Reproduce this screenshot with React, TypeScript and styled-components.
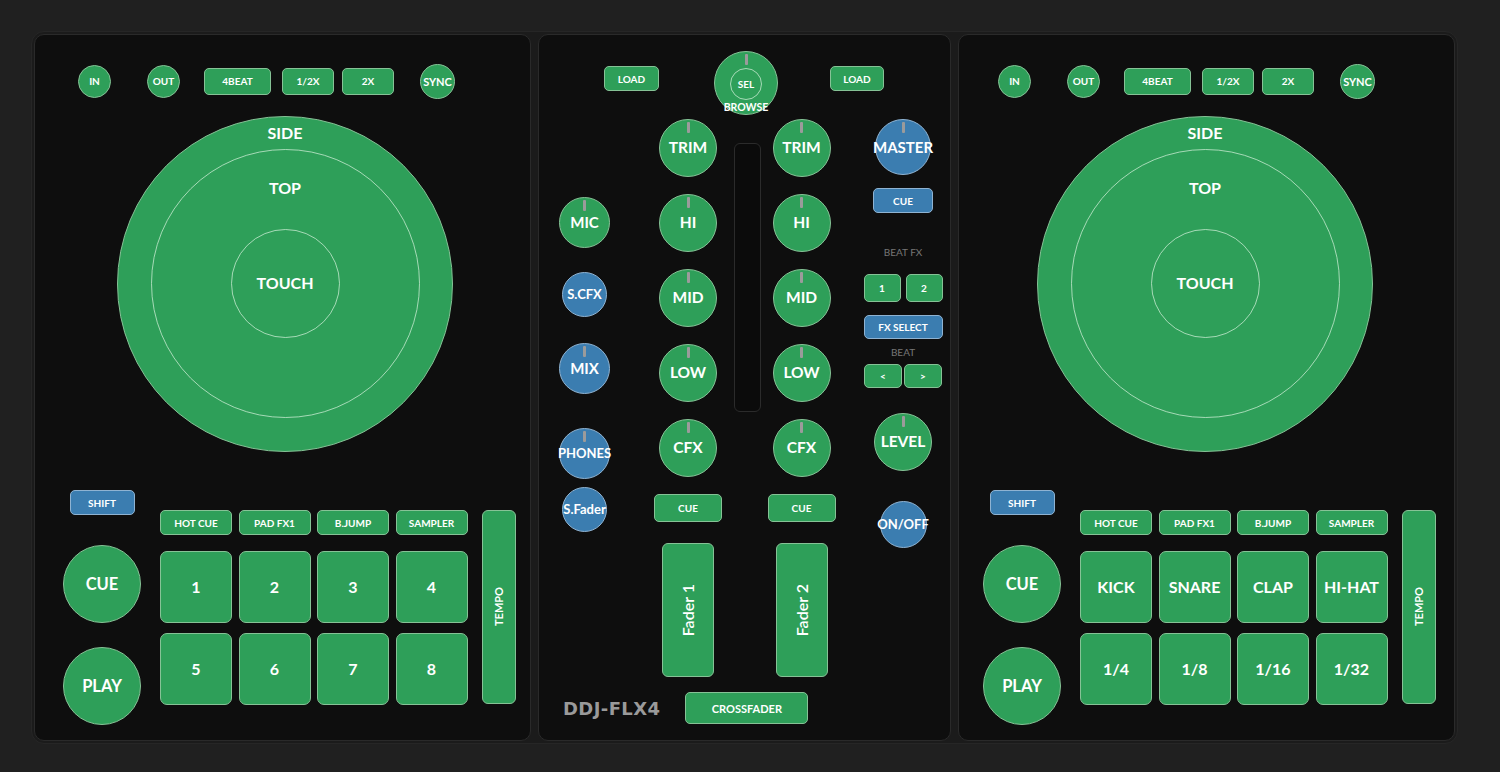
import React from 'react';
import styled, { createGlobalStyle, css } from 'styled-components';

type Tone = 'green' | 'blue';

const C = {
  page: '#202020',
  frame: '#1b1b1b',
  frameEdge: '#262626',
  panel: '#0e0e0e',
  panelEdge: '#2a2a2a',
  green: '#2e9f59',
  greenEdge: '#86c296',
  blue: '#3b7db0',
  blueEdge: '#8fb3d2',
  ring: 'rgba(205, 238, 214, 0.75)',
  mark: '#9b9b9b',
};

const GlobalStyle = createGlobalStyle`
  html, body { margin: 0; padding: 0; background: ${C.page}; }
  body {
    width: 1500px; height: 772px; overflow: hidden;
    font-family: Lato, "Open Sans", "DejaVu Sans", sans-serif;
    -webkit-font-smoothing: antialiased;
  }
  #root { width: 1500px; height: 772px; }
`;

const toneStyles = ({ $tone }: { $tone?: Tone }) =>
  $tone === 'blue'
    ? css`background: ${C.blue}; border-color: ${C.blueEdge};`
    : css`background: ${C.green}; border-color: ${C.greenEdge};`;

interface BoxProps {
  $tone?: Tone;
  $fs?: number;
  $ml?: number;
  $mt?: number;
}

const Control = styled.div<BoxProps>`
  box-sizing: border-box;
  flex-shrink: 0;
  display: flex;
  align-items: center;
  justify-content: center;
  border: 1.8px solid;
  ${toneStyles}
  color: #fff;
  font-weight: 700;
  font-size: ${(p) => p.$fs ?? 10}px;
  line-height: 1;
  white-space: nowrap;
  margin-left: ${(p) => p.$ml ?? 0}px;
  margin-top: ${(p) => p.$mt ?? 0}px;
  user-select: none;
`;

const RoundBtn = styled(Control)<{ $size: number }>`
  width: ${(p) => p.$size}px;
  height: ${(p) => p.$size}px;
  border-radius: 50%;
`;

const Knob = styled(RoundBtn)<{ $mark?: boolean }>`
  position: relative;
  ${(p) =>
    p.$mark !== false &&
    css`
      &::before {
        content: '';
        position: absolute;
        top: 2px;
        left: 50%;
        width: 3px;
        height: 11px;
        margin-left: -1.5px;
        background: ${C.mark};
        border-radius: 1px;
      }
    `}
`;

const RectBtn = styled(Control)<{ $w: number; $h: number; $r?: number }>`
  width: ${(p) => p.$w}px;
  height: ${(p) => p.$h}px;
  border-radius: ${(p) => p.$r ?? 5}px;
`;

const Pad = styled(Control)`
  border-radius: 7px;
  font-size: 16px;
`;

const ModeBtn = styled(Control)`
  border-radius: 5px;
  font-size: 10px;
`;

const VerticalText = styled.span<{ $fs: number; $weight?: number }>`
  writing-mode: vertical-rl;
  transform: rotate(180deg);
  font-size: ${(p) => p.$fs}px;
  font-weight: ${(p) => p.$weight ?? 700};
`;

/* ---------- page frame ---------- */

const Frame = styled.main`
  margin: 31px 0 0 31px;
  width: 1427px;
  height: 713px;
  box-sizing: border-box;
  padding: 2px;
  border: 1px solid ${C.frameEdge};
  border-radius: 13px;
  background: ${C.frame};
  display: flex;
  gap: 7px;
`;

const Panel = styled.section`
  box-sizing: border-box;
  height: 100%;
  background: ${C.panel};
  border: 1px solid ${C.panelEdge};
  border-radius: 10px;
  display: flex;
  flex-direction: column;
  align-items: flex-start;
`;

/* ---------- deck ---------- */

const DeckPanel = styled(Panel)<{ $pl: number }>`
  width: 497px;
  padding: 28px 0 0 ${(p) => p.$pl}px;
`;

const TransportRow = styled.div`
  display: flex;
  align-items: center;
  height: 36px;
`;

const JogOuter = styled.div`
  box-sizing: border-box;
  width: 336px;
  height: 336px;
  margin: 17px 0 0 54px;
  border-radius: 50%;
  background: ${C.green};
  border: 1.5px solid ${C.greenEdge};
  display: flex;
  flex-direction: column;
  align-items: center;
  color: #fff;
  font-weight: 700;
`;

const RingLabel = styled.div<{ $h: number; $mt?: number }>`
  height: ${(p) => p.$h}px;
  line-height: ${(p) => p.$h}px;
  margin-top: ${(p) => p.$mt ?? 0}px;
  font-size: 16px;
`;

const Ring = styled.div<{ $size: number; $mt?: number; $center?: boolean }>`
  box-sizing: border-box;
  flex-shrink: 0;
  width: ${(p) => p.$size}px;
  height: ${(p) => p.$size}px;
  margin-top: ${(p) => p.$mt ?? 0}px;
  border-radius: 50%;
  border: 1.5px solid ${C.ring};
  display: flex;
  flex-direction: column;
  align-items: center;
  justify-content: ${(p) => (p.$center ? 'center' : 'flex-start')};
`;

const DeckBottom = styled.div`
  display: flex;
  align-items: flex-start;
  margin-top: 38px;
`;

const PlayColumn = styled.div`
  width: 78px;
  display: flex;
  flex-direction: column;
  align-items: center;
`;

const PadArea = styled.div`
  margin: 20px 0 0 19px;
  display: flex;
  flex-direction: column;
`;

const PadGrid = styled.div<{ $rowH: number; $mt?: number }>`
  display: grid;
  grid-template-columns: repeat(4, 72px);
  grid-auto-rows: ${(p) => p.$rowH}px;
  column-gap: 6.5px;
  row-gap: 10px;
  margin-top: ${(p) => p.$mt ?? 0}px;
`;

const TempoStrip = styled(Control)`
  width: 34px;
  height: 194px;
  margin: 20px 0 0 14px;
  border-radius: 6px;
`;

const MODES = ['HOT CUE', 'PAD FX1', 'B.JUMP', 'SAMPLER'];

const Deck = ({ pl, pads }: { pl: number; pads: string[] }) => (
  <DeckPanel $pl={pl}>
    <TransportRow>
      <RoundBtn $size={33} $ml={15}>IN</RoundBtn>
      <RoundBtn $size={33} $ml={36}>OUT</RoundBtn>
      <RectBtn $w={67} $h={27} $ml={24}>4BEAT</RectBtn>
      <RectBtn $w={52} $h={27} $ml={11}>1/2X</RectBtn>
      <RectBtn $w={52} $h={27} $ml={8}>2X</RectBtn>
      <RoundBtn $size={35} $ml={26} $fs={11}>SYNC</RoundBtn>
    </TransportRow>

    <JogOuter>
      <RingLabel $h={32}>SIDE</RingLabel>
      <Ring $size={269}>
        <RingLabel $h={20} $mt={28}>TOP</RingLabel>
        <Ring $size={109} $mt={30.5} $center>
          <RingLabel $h={20}>TOUCH</RingLabel>
        </Ring>
      </Ring>
    </JogOuter>

    <DeckBottom>
      <PlayColumn>
        <RectBtn $tone="blue" $w={65} $h={25}>SHIFT</RectBtn>
        <RoundBtn $size={78} $fs={16.5} $mt={30}>CUE</RoundBtn>
        <RoundBtn $size={78} $fs={16.5} $mt={24}>PLAY</RoundBtn>
      </PlayColumn>
      <PadArea>
        <PadGrid $rowH={25}>
          {MODES.map((m) => (
            <ModeBtn key={m}>{m}</ModeBtn>
          ))}
        </PadGrid>
        <PadGrid $rowH={72} $mt={16}>
          {pads.map((p) => (
            <Pad key={p}>{p}</Pad>
          ))}
        </PadGrid>
      </PadArea>
      <TempoStrip>
        <VerticalText $fs={11}>TEMPO</VerticalText>
      </TempoStrip>
    </DeckBottom>
  </DeckPanel>
);

/* ---------- mixer ---------- */

const MixerPanel = styled(Panel)`
  width: 413px;
  padding-top: 16px;
`;

const MixerTop = styled.div`
  display: flex;
  align-items: flex-start;
  padding-left: 65px;
`;

const BrowseKnob = styled(Knob)`
  flex-direction: column;
  justify-content: flex-start;
  padding-top: 15.5px;
`;

const SelRing = styled.div`
  box-sizing: border-box;
  width: 32px;
  height: 32px;
  border-radius: 50%;
  border: 1.5px solid ${C.ring};
  display: flex;
  align-items: center;
  justify-content: center;
  font-size: 10px;
`;

const BrowseLabel = styled.div`
  margin-top: 2px;
  font-size: 10.5px;
  line-height: 11px;
`;

const MixerBody = styled.div`
  display: flex;
  align-items: flex-start;
  padding-left: 17px;
  margin-top: 4px;
`;

const MixCol = styled.div<{ $w: number; $ml?: number }>`
  width: ${(p) => p.$w}px;
  margin-left: ${(p) => p.$ml ?? 0}px;
  display: flex;
  flex-direction: column;
  align-items: center;
`;

const ChannelStack = styled(MixCol)`
  gap: 17px;
`;

const MeterSlot = styled.div`
  box-sizing: border-box;
  width: 27px;
  height: 269px;
  margin-top: 24px;
  border: 1.5px solid #2b2b2b;
  border-radius: 6px;
  background: #0b0b0b;
`;

const Fader = styled(Control)`
  width: 52px;
  height: 134px;
  border-radius: 6px;
  margin-top: 4px;
`;

const SectionLabel = styled.div<{ $mt: number }>`
  margin-top: ${(p) => p.$mt}px;
  height: 12px;
  line-height: 12px;
  font-size: 10px;
  font-weight: 400;
  color: #767676;
  white-space: nowrap;
`;

const PairRow = styled.div<{ $gap: number; $mt: number }>`
  display: flex;
  gap: ${(p) => p.$gap}px;
  margin-top: ${(p) => p.$mt}px;
`;

const MixerFoot = styled.div`
  display: flex;
  align-items: center;
  gap: 25px;
  padding-left: 24px;
  margin-top: 15px;
`;

const Brand = styled.div`
  font-family: "DejaVu Sans", Verdana, sans-serif;
  font-weight: 700;
  font-size: 18px;
  color: #9a9a9a;
  letter-spacing: 0.4px;
  white-space: nowrap;
`;

const EQ = ['TRIM', 'HI', 'MID', 'LOW', 'CFX'];

const Channel = ({ ml, label }: { ml: number; label: string }) => (
  <ChannelStack $w={64} $ml={ml}>
    {EQ.map((k) => (
      <Knob key={k} $size={58} $fs={15.5}>
        {k}
      </Knob>
    ))}
    <RectBtn $w={68} $h={28}>CUE</RectBtn>
    <Fader>
      <VerticalText $fs={16} $weight={600}>
        {label}
      </VerticalText>
    </Fader>
  </ChannelStack>
);

const Mixer = () => (
  <MixerPanel>
    <MixerTop>
      <RectBtn $w={55} $h={25} $mt={15}>LOAD</RectBtn>
      <BrowseKnob as="div" $size={64} $ml={55}>
        <SelRing>SEL</SelRing>
        <BrowseLabel>BROWSE</BrowseLabel>
      </BrowseKnob>
      <RectBtn $w={54} $h={25} $mt={15} $ml={52}>LOAD</RectBtn>
    </MixerTop>

    <MixerBody>
      <MixCol $w={57}>
        <Knob $size={51} $fs={15} $mt={78}>MIC</Knob>
        <Knob $size={45} $fs={13} $mt={24} $tone="blue" $mark={false}>S.CFX</Knob>
        <Knob $size={51} $fs={15} $mt={26} $tone="blue">MIX</Knob>
        <Knob $size={51} $fs={13} $mt={34} $tone="blue">PHONES</Knob>
        <Knob $size={45} $fs={13} $mt={8} $tone="blue" $mark={false}>S.Fader</Knob>
      </MixCol>

      <Channel ml={43} label="Fader 1" />

      <MixCol $w={27} $ml={14}>
        <MeterSlot />
      </MixCol>

      <Channel ml={8.5} label="Fader 2" />

      <MixCol $w={84} $ml={27.5}>
        <Knob $size={56} $fs={15} $tone="blue">MASTER</Knob>
        <RectBtn $w={60} $h={25} $mt={13} $tone="blue">CUE</RectBtn>
        <SectionLabel $mt={33}>BEAT FX</SectionLabel>
        <PairRow $gap={5} $mt={16}>
          <RectBtn $w={37} $h={28}>1</RectBtn>
          <RectBtn $w={37} $h={28}>2</RectBtn>
        </PairRow>
        <RectBtn $w={79} $h={24} $mt={13} $tone="blue">FX SELECT</RectBtn>
        <SectionLabel $mt={7}>BEAT</SectionLabel>
        <PairRow $gap={2} $mt={6}>
          <RectBtn $w={38} $h={24}>&lt;</RectBtn>
          <RectBtn $w={38} $h={24}>&gt;</RectBtn>
        </PairRow>
        <Knob $size={58} $fs={15.5} $mt={25}>LEVEL</Knob>
        <Knob $size={47} $fs={13} $mt={30} $tone="blue" $mark={false}>ON/OFF</Knob>
      </MixCol>
    </MixerBody>

    <MixerFoot>
      <Brand>DDJ-FLX4</Brand>
      <RectBtn $w={123} $h={32} $fs={11}>CROSSFADER</RectBtn>
    </MixerFoot>
  </MixerPanel>
);

export default function App() {
  return (
    <>
      <GlobalStyle />
      <Frame>
        <Deck pl={28} pads={['1', '2', '3', '4', '5', '6', '7', '8']} />
        <Mixer />
        <Deck
          pl={24}
          pads={['KICK', 'SNARE', 'CLAP', 'HI-HAT', '1/4', '1/8', '1/16', '1/32']}
        />
      </Frame>
    </>
  );
}
